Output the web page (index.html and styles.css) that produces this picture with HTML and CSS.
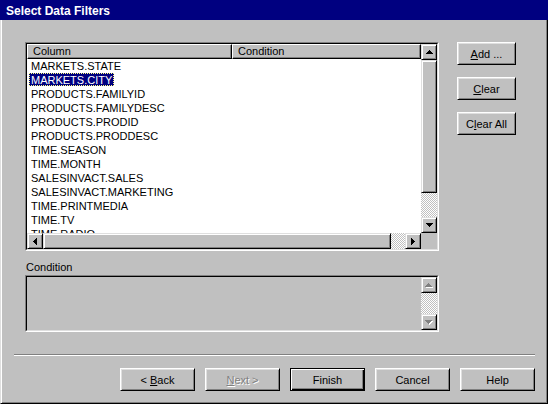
FILE: index.html
```html
<!DOCTYPE html>
<html>
<head>
<meta charset="utf-8">
<link rel="stylesheet" href="styles.css">
</head>
<body>
<div class="window">
  <div class="titlebar">Select Data Filters</div>
  <div class="frame">
    <div class="main">
      <div class="leftcol">
        <div class="sunken list">
          <div class="sunken-in listgrid">
            <div class="lv">
              <div class="lvhead">
                <div class="hcell hcol">Column</div>
                <div class="hcell hcond">Condition</div>
              </div>
              <div class="row"><span class="item">MARKETS.STATE</span></div>
              <div class="row"><span class="item sel">MARKETS.CITY</span></div>
              <div class="row"><span class="item">PRODUCTS.FAMILYID</span></div>
              <div class="row"><span class="item">PRODUCTS.FAMILYDESC</span></div>
              <div class="row"><span class="item">PRODUCTS.PRODID</span></div>
              <div class="row"><span class="item">PRODUCTS.PRODDESC</span></div>
              <div class="row"><span class="item">TIME.SEASON</span></div>
              <div class="row"><span class="item">TIME.MONTH</span></div>
              <div class="row"><span class="item">SALESINVACT.SALES</span></div>
              <div class="row"><span class="item">SALESINVACT.MARKETING</span></div>
              <div class="row"><span class="item">TIME.PRINTMEDIA</span></div>
              <div class="row"><span class="item">TIME.TV</span></div>
              <div class="row"><span class="item">TIME.RADIO</span></div>
            </div>
            <div class="vscroll">
              <div class="sbtn"><svg width="7" height="4" viewBox="0 0 7 4" shape-rendering="crispEdges"><path d="M3 0h1v1h1v1h1v1h1v1H0V3h1V2h1V1h1z" fill="#000"/></svg></div>
              <div class="vthumb"></div>
              <div class="track"></div>
              <div class="sbtn"><svg width="7" height="4" viewBox="0 0 7 4" shape-rendering="crispEdges"><path d="M0 0h7v1h-1v1h-1v1h-1v1h-1v-1h-1v-1h-1v-1h-1z" fill="#000"/></svg></div>
            </div>
            <div class="hscroll">
              <div class="sbtn"><svg width="4" height="7" viewBox="0 0 4 7" shape-rendering="crispEdges"><path d="M3 0h1v7h-1v-1h-1v-1h-1v-1h-1v-1h1v-1h1v-1h1z" fill="#000"/></svg></div>
              <div class="hthumb"></div>
              <div class="track"></div>
              <div class="sbtn"><svg width="4" height="7" viewBox="0 0 4 7" shape-rendering="crispEdges"><path d="M0 0h1v1h1v1h1v1h1v1h-1v1h-1v1h-1v1h-1z" fill="#000"/></svg></div>
            </div>
            <div class="corner"></div>
          </div>
        </div>
        <div class="label">Condition</div>
        <div class="sunken cond">
          <div class="sunken-in condgrid">
            <div class="condtext"></div>
            <div class="vscroll">
              <div class="sbtn"><svg width="8" height="5" viewBox="0 0 8 5" shape-rendering="crispEdges"><path d="M3 0h1v1h1v1h1v1h1v1H0V3h1V2h1V1h1z" fill="#fff" transform="translate(1,1)"/><path d="M3 0h1v1h1v1h1v1h1v1H0V3h1V2h1V1h1z" fill="#808080"/></svg></div>
              <div class="track"></div>
              <div class="sbtn"><svg width="8" height="5" viewBox="0 0 8 5" shape-rendering="crispEdges"><path d="M0 0h7v1h-1v1h-1v1h-1v1h-1v-1h-1v-1h-1v-1h-1z" fill="#fff" transform="translate(1,1)"/><path d="M0 0h7v1h-1v1h-1v1h-1v1h-1v-1h-1v-1h-1v-1h-1z" fill="#808080"/></svg></div>
            </div>
          </div>
        </div>
      </div>
      <div class="side">
        <div class="btn sidebtn"><span><u>A</u>dd ...</span></div>
        <div class="btn sidebtn"><span><u>C</u>lear</span></div>
        <div class="btn sidebtn"><span>C<u>l</u>ear All</span></div>
      </div>
    </div>
    <div class="sep"></div>
    <div class="bottom">
      <div class="btn wbtn"><span>&lt; <u>B</u>ack</span></div>
      <div class="btn wbtn disabled"><span><u>N</u>ext &gt;</span></div>
      <div class="btn wbtn default"><span>Finish</span></div>
      <div class="btn wbtn"><span>Cancel</span></div>
      <div class="btn wbtn"><span>Help</span></div>
    </div>
  </div>
</div>
</body>
</html>
```
FILE: styles.css
```css
html, body {
  margin: 0;
  padding: 0;
  background: #c0c0c0;
}
body {
  font-family: "Liberation Sans", Arial, sans-serif;
  font-size: 11px;
  color: #000;
}
.window {
  width: 548px;
  height: 404px;
  display: flex;
  flex-direction: column;
  background: #c0c0c0;
  overflow: hidden;
}
.titlebar {
  height: 20px;
  box-sizing: border-box;
  background: #000080;
  color: #fff;
  font-weight: bold;
  font-size: 12px;
  line-height: 18px;
  padding: 2px 0 0 6px;
  flex: none;
}
.frame {
  flex: 1;
  box-sizing: border-box;
  border-left: 1px solid #dfdfdf;
  border-right: 1px solid #000;
  border-bottom: 1px solid #000;
  padding: 0 1px 1px 1px;
  box-shadow: inset 1px 0 #fff, inset -1px -1px #808080;
  display: flex;
  flex-direction: column;
}
.main {
  display: flex;
  align-items: flex-start;
  padding: 22px 0 0 23px;
}
.leftcol {
  width: 414px;
  display: flex;
  flex-direction: column;
}
.sunken {
  box-sizing: border-box;
  border: 1px solid;
  border-color: #808080 #fff #fff #808080;
}
.sunken-in {
  box-sizing: border-box;
  border: 1px solid;
  border-color: #000 #dfdfdf #dfdfdf #000;
  height: 100%;
}
.list {
  height: 209px;
}
.listgrid {
  display: grid;
  grid-template-columns: 394px 16px;
  grid-template-rows: 189px 16px;
  background: #fff;
}
.lv {
  overflow: hidden;
  background: #fff;
}
.lvhead {
  display: flex;
  height: 15px;
}
.hcell {
  box-sizing: border-box;
  height: 15px;
  background: #c0c0c0;
  border: 1px solid;
  border-color: #fff #000 #000 #fff;
  box-shadow: inset -1px -1px #808080;
  padding-left: 5px;
  line-height: 13px;
  white-space: nowrap;
}
.hcol {
  width: 205px;
}
.hcond {
  flex: 1;
}
.row {
  height: 14px;
  line-height: 14px;
  white-space: nowrap;
}
.item {
  display: inline-block;
  margin-left: 2px;
  padding: 0 2px;
  height: 13px;
  line-height: 14px;
  vertical-align: top;
}
.item.sel {
  background: #000080;
  color: #fff;
  outline: 1px dotted #ffff80;
  outline-offset: -1px;
}
.vscroll {
  display: flex;
  flex-direction: column;
  background: #c0c0c0;
}
.hscroll {
  display: flex;
  flex-direction: row;
  background: #c0c0c0;
}
.sbtn {
  box-sizing: border-box;
  width: 16px;
  height: 16px;
  flex: none;
  background: #c0c0c0;
  border: 1px solid;
  border-color: #dfdfdf #000 #000 #dfdfdf;
  box-shadow: inset 1px 1px #fff, inset -1px -1px #808080;
  display: flex;
  align-items: center;
  justify-content: center;
}
.sbtn svg {
  display: block;
}
.vthumb, .hthumb {
  box-sizing: border-box;
  flex: none;
  background: #c0c0c0;
  border: 1px solid;
  border-color: #dfdfdf #000 #000 #dfdfdf;
  box-shadow: inset 1px 1px #fff, inset -1px -1px #808080;
}
.vthumb {
  height: 133px;
  width: 16px;
}
.hthumb {
  width: 348px;
  height: 16px;
}
.track {
  flex: 1;
  background: repeating-conic-gradient(#fff 0 25%, #c0c0c0 0 50%) 0 0 / 2px 2px;
}
.corner {
  background: #c0c0c0;
}
.label {
  margin-top: 9px;
  margin-bottom: 1px;
  height: 14px;
  line-height: 14px;
  padding-left: 1px;
}
.cond {
  height: 57px;
}
.condgrid {
  display: grid;
  grid-template-columns: 394px 16px;
  background: #c0c0c0;
}
.side {
  margin-left: 18px;
  display: flex;
  flex-direction: column;
  gap: 12px;
}
.btn {
  box-sizing: border-box;
  height: 23px;
  background: #c0c0c0;
  border: 1px solid;
  border-color: #fff #000 #000 #fff;
  box-shadow: inset 1px 1px #dfdfdf, inset -1px -1px #808080;
  display: flex;
  align-items: center;
  justify-content: center;
  white-space: nowrap;
}
.btn u {
  text-decoration: underline;
  text-underline-offset: 1px;
}
.sidebtn {
  width: 59px;
}
.sep {
  margin: 22px 11px 0 12px;
  height: 2px;
  box-sizing: border-box;
  border-top: 1px solid #808080;
  border-bottom: 1px solid #fff;
}
.bottom {
  margin-top: 12px;
  display: flex;
  justify-content: flex-end;
  gap: 10px;
  padding-right: 11px;
}
.wbtn {
  width: 75px;
}
.wbtn.disabled {
  color: #808080;
  text-shadow: 1px 1px #fff;
}
.wbtn.default {
  border-color: #000;
  box-shadow: inset 1px 1px #fff, inset -1px -1px #000, inset -2px -2px #808080;
}
```
